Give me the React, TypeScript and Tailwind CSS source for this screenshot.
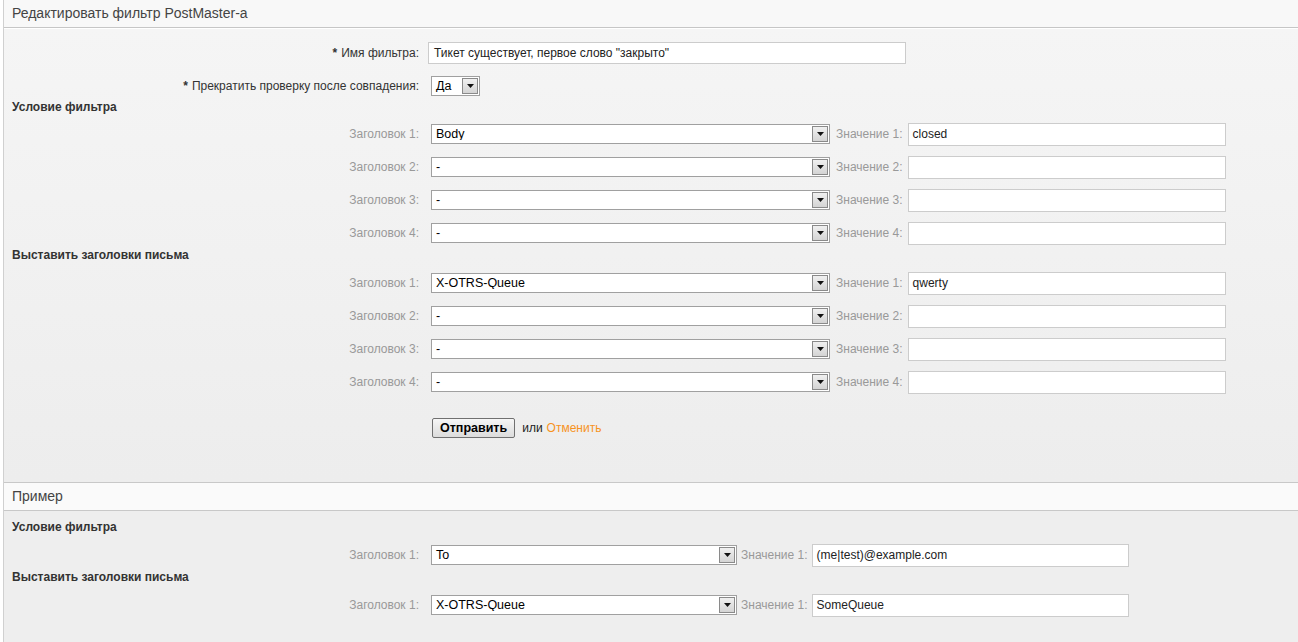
// App.tsx — "Редактировать фильтр PostMaster-a" form (OTRS-style admin page)

// ── Fake select with the classic dropdown button ─────────────
function FakeSelect({ value, width }: { value: string; width: string }) {
    return (
        <div className={`flex items-center h-[20px] bg-white border border-[#a0a0a0] ${width}`}>
            <span className="flex-1 pl-[4px] text-[12.5px] text-black leading-none truncate">{value}</span>
            <div className="w-[16px] h-[16px] mr-[1px] flex items-center justify-center border border-[#8a8a8a] bg-gradient-to-b from-[#f0f0f0] to-[#d4d4d4]">
                <svg width="7" height="4" viewBox="0 0 7 4">
                    <path d="M0 0h7L3.5 4z" fill="#111" />
                </svg>
            </div>
        </div>
    );
}

// ── Plain text input ─────────────────────────────────────────
function TextInput({ value = '', width }: { value?: string; width: string }) {
    return (
        <div className={`flex items-center h-[23px] bg-white border border-[#cccccc] pl-[4px] text-[12px] text-[#222] ${width}`}>
            {value}
        </div>
    );
}

// ── Header / value row ───────────────────────────────────────
function HeaderRow({
    n, header, value = '', selectW, inputW, wide = true, className = '',
}: {
    n: number; header: string; value?: string; selectW: string; inputW: string; wide?: boolean; className?: string;
}) {
    return (
        <div className={`flex items-center h-[22px] ${className}`}>
            <div className="w-[415px] text-right text-[12px] text-[#999]">Заголовок {n}:</div>
            <div className="ml-[12px]">
                <FakeSelect value={header} width={selectW} />
            </div>
            <div className={`${wide ? 'ml-[6px]' : 'ml-[4px]'} text-[12px] text-[#999] whitespace-nowrap`}>Значение {n}:</div>
            <div className={wide ? 'ml-[5px]' : 'ml-[4px]'}>
                <TextInput value={value} width={inputW} />
            </div>
        </div>
    );
}

function GroupTitle({ children, className = '' }: { children: React.ReactNode; className?: string }) {
    return (
        <div className={`pl-[8px] h-[14px] leading-[14px] text-[12px] font-bold text-[#333] ${className}`}>
            {children}
        </div>
    );
}

export default function App() {
    const setRows = [
        { header: 'Body', value: 'closed' },
        { header: '-', value: '' },
        { header: '-', value: '' },
        { header: '-', value: '' },
    ];
    const headerRows = [
        { header: 'X-OTRS-Queue', value: 'qwerty' },
        { header: '-', value: '' },
        { header: '-', value: '' },
        { header: '-', value: '' },
    ];

    return (
        <div className="w-full h-[642px] overflow-hidden bg-white font-['Liberation_Sans',Arial,sans-serif]">
            <div className="ml-[3px] mr-[-6px] border-l border-[#d0d0d0]">

                {/* Edit section header */}
                <div className="h-[28px] bg-[#f8f8f8] border-b border-[#c6c6c6] flex items-center pl-[8px] text-[14px] text-[#444]">
                    Редактировать фильтр PostMaster-a
                </div>

                {/* Edit section body */}
                <div className="border-t border-white bg-gradient-to-b from-[#f5f5f5] to-[#ededed] pt-[13px] pb-[44px]">

                    {/* Filter name */}
                    <div className="flex items-center h-[22px]">
                        <div className="w-[415px] text-right text-[12px] text-[#333]">
                            <span className="font-bold mr-[4px]">*</span>Имя фильтра:
                        </div>
                        <div className="ml-[9px]">
                            <div className="flex items-center h-[22px] w-[478px] bg-white border border-[#cccccc] pl-[5px] text-[12px] text-[#222]">
                                Тикет существует, первое слово "закрыто"
                            </div>
                        </div>
                    </div>

                    {/* Stop after match */}
                    <div className="flex items-center h-[22px] mt-[11px]">
                        <div className="w-[415px] text-right text-[12px] text-[#333]">
                            <span className="font-bold mr-[4px]">*</span>Прекратить проверку после совпадения:
                        </div>
                        <div className="ml-[12px]">
                            <FakeSelect value="Да" width="w-[49px]" />
                        </div>
                    </div>

                    <GroupTitle className="mt-[3px]">Условие фильтра</GroupTitle>
                    {setRows.map((r, i) => (
                        <HeaderRow
                            key={i}
                            n={i + 1}
                            header={r.header}
                            value={r.value}
                            selectW="w-[399px]"
                            inputW="w-[318px]"
                            className={i === 0 ? 'mt-[9px]' : 'mt-[11px]'}
                        />
                    ))}

                    <GroupTitle className="mt-[4px]">Выставить заголовки письма</GroupTitle>
                    {headerRows.map((r, i) => (
                        <HeaderRow
                            key={i}
                            n={i + 1}
                            header={r.header}
                            value={r.value}
                            selectW="w-[399px]"
                            inputW="w-[318px]"
                            className={i === 0 ? 'mt-[10px]' : 'mt-[11px]'}
                        />
                    ))}

                    {/* Submit */}
                    <div className="flex items-center mt-[25px] pl-[428px]">
                        <button className="h-[20px] px-[7px] border border-[#707070] rounded-[2px] bg-gradient-to-b from-[#f6f6f6] to-[#dcdcdc] text-[12.5px] font-bold text-black leading-none">
                            Отправить
                        </button>
                        <span className="ml-[7px] text-[12px] text-[#222]">или</span>
                        <span className="ml-[4px] text-[12px] text-[#f7931e]">Отменить</span>
                    </div>
                </div>

                {/* Example section header */}
                <div className="h-[29px] bg-[#fafafa] border-t border-[#c8c8c8] border-b flex items-center pl-[8px] text-[14px] text-[#444]">
                    Пример
                </div>

                {/* Example section body */}
                <div className="bg-[#eeeeee] pt-[9px] pb-[40px]">
                    <GroupTitle>Условие фильтра</GroupTitle>
                    <HeaderRow n={1} header="To" value="(me|test)@example.com" selectW="w-[306px]" inputW="w-[317px]" wide={false} className="mt-[10px]" />
                    <GroupTitle className="mt-[4px]">Выставить заголовки письма</GroupTitle>
                    <HeaderRow n={1} header="X-OTRS-Queue" value="SomeQueue" selectW="w-[306px]" inputW="w-[317px]" wide={false} className="mt-[10px]" />
                </div>
            </div>
        </div>
    );
}
